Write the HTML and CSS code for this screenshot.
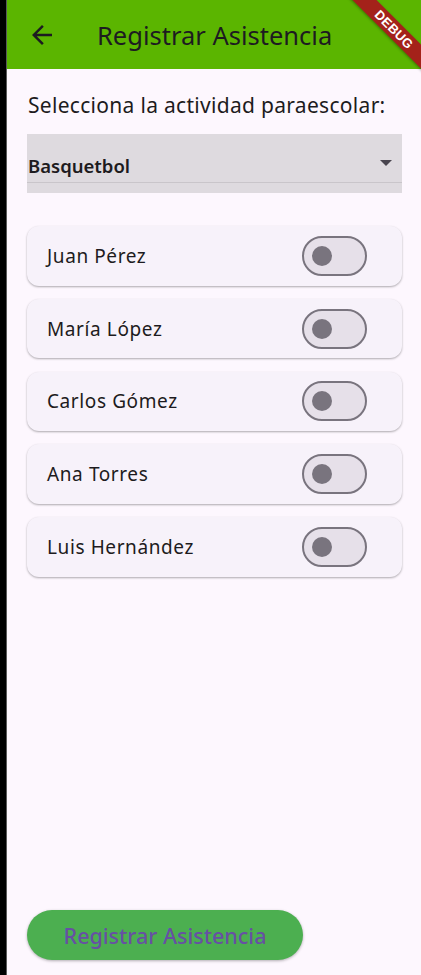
FILE: index.html
```html
<!DOCTYPE html>
<html lang="es">
<head>
<meta charset="utf-8">
<link rel="stylesheet" href="styles.css">
</head>
<body>
<div class="frame">
  <div class="edge"></div>
  <div class="app">
    <header class="appbar">
      <svg class="back" width="30" height="30" viewBox="0 0 24 24"><path d="M20 11H7.83l5.59-5.59L12 4l-8 8 8 8 1.41-1.41L7.83 13H20v-2z" fill="#1d1b20"/></svg>
      <h1 class="title">Registrar Asistencia</h1>
      <div class="debug"><span>DEBUG</span></div>
    </header>
    <main class="content">
      <p class="label">Selecciona la actividad paraescolar:</p>
      <div class="dropdown">
        <span class="dd-value">Basquetbol</span>
        <svg class="dd-arrow" width="12" height="6" viewBox="0 0 12 6"><path d="M0 0h12L6 6z" fill="#49454f"/></svg>
      </div>
      <ul class="list">
        <li class="card"><span class="name">Juan Pérez</span><span class="switch"><span class="thumb"></span></span></li>
        <li class="card"><span class="name">María López</span><span class="switch"><span class="thumb"></span></span></li>
        <li class="card"><span class="name">Carlos Gómez</span><span class="switch"><span class="thumb"></span></span></li>
        <li class="card"><span class="name">Ana Torres</span><span class="switch"><span class="thumb"></span></span></li>
        <li class="card"><span class="name">Luis Hernández</span><span class="switch"><span class="thumb"></span></span></li>
      </ul>
      <div class="spacer"></div>
      <button class="submit">Registrar Asistencia</button>
    </main>
  </div>
</div>
</body>
</html>
```
FILE: styles.css
```css
* { box-sizing: border-box; }
html, body { margin: 0; padding: 0; }
body {
  width: 421px;
  height: 975px;
  overflow: hidden;
  font-family: "Noto Sans", "Open Sans", sans-serif;
  background: #000;
}
.frame {
  display: flex;
  height: 975px;
}
.edge {
  width: 7px;
  flex: none;
  background: #000;
  border-right: 1px solid #5a5a5a;
}
.app {
  flex: 1;
  display: flex;
  flex-direction: column;
  background: #fdf7fe;
  position: relative;
  overflow: hidden;
}
.appbar {
  height: 69px;
  flex: none;
  background: #5bb500;
  display: flex;
  align-items: center;
  padding-left: 20px;
  position: relative;
}
.back { width: 30px; height: 30px; flex: none; }
.title {
  margin: 0 0 0 40px;
  font-weight: 400;
  font-size: 25.5px;
  color: #1d1b20;
  letter-spacing: 0;
}
.debug {
  position: absolute;
  top: 21px;
  right: -33px;
  width: 120px;
  height: 17px;
  background: #a4221a;
  transform: rotate(45deg);
  display: flex;
  align-items: center;
  justify-content: center;
  box-shadow: 0 1px 3px rgba(0,0,0,0.35);
}
.debug span {
  color: #fff;
  font-family: "Liberation Sans", sans-serif;
  font-weight: 700;
  font-size: 13px;
  letter-spacing: 0.3px;
}
.content {
  flex: 1;
  display: flex;
  flex-direction: column;
  padding: 20px 19px 15px 20px;
}
.label {
  margin: 3px 0 0 1px;
  font-size: 21px;
  letter-spacing: 0.3px;
  color: #1d1b20;
  line-height: 26px;
}
.dropdown {
  margin-top: 16px;
  height: 59px;
  background: #dedadf;
  position: relative;
  display: flex;
  align-items: center;
  padding: 0 10px 0 1px;
  border-bottom: 10px solid #dedadf;
  box-shadow: inset 0 -1px 0 #c9c5ca;
}
.dd-value {
  font-weight: 600;
  font-size: 18.5px;
  color: #1d1b20;
  flex: 1;
  padding-top: 14px;
}
.dd-arrow { margin-top: 8px; }
.list {
  list-style: none;
  margin: 33px 0 0 0;
  padding: 0;
  display: flex;
  flex-direction: column;
  gap: 13.25px;
}
.card {
  height: 59.5px;
  background: #f7f2fa;
  border-radius: 12px;
  box-shadow: 0 1px 2px rgba(0,0,0,0.25), 0 1px 3px rgba(0,0,0,0.08);
  display: flex;
  align-items: center;
  padding: 0 35px 0 20px;
}
.name {
  flex: 1;
  font-size: 19px;
  letter-spacing: 0.6px;
  color: #1d1b20;
}
.switch {
  width: 65px;
  height: 40px;
  border: 2.5px solid #79747e;
  border-radius: 20px;
  background: #e6e0e9;
  display: flex;
  align-items: center;
  padding-left: 7.5px;
}
.thumb {
  width: 20px;
  height: 20px;
  border-radius: 50%;
  background: #79747e;
}
.spacer { flex: 1; }
.submit {
  align-self: flex-start;
  width: 276px;
  height: 50px;
  border: none;
  border-radius: 25px;
  background: #4caf50;
  color: #6750a4;
  font-family: "Noto Sans", "Open Sans", sans-serif;
  font-size: 21.5px;
  font-weight: 500;
  box-shadow: 0 1px 3px rgba(0,0,0,0.3);
  padding: 0;
}
```
